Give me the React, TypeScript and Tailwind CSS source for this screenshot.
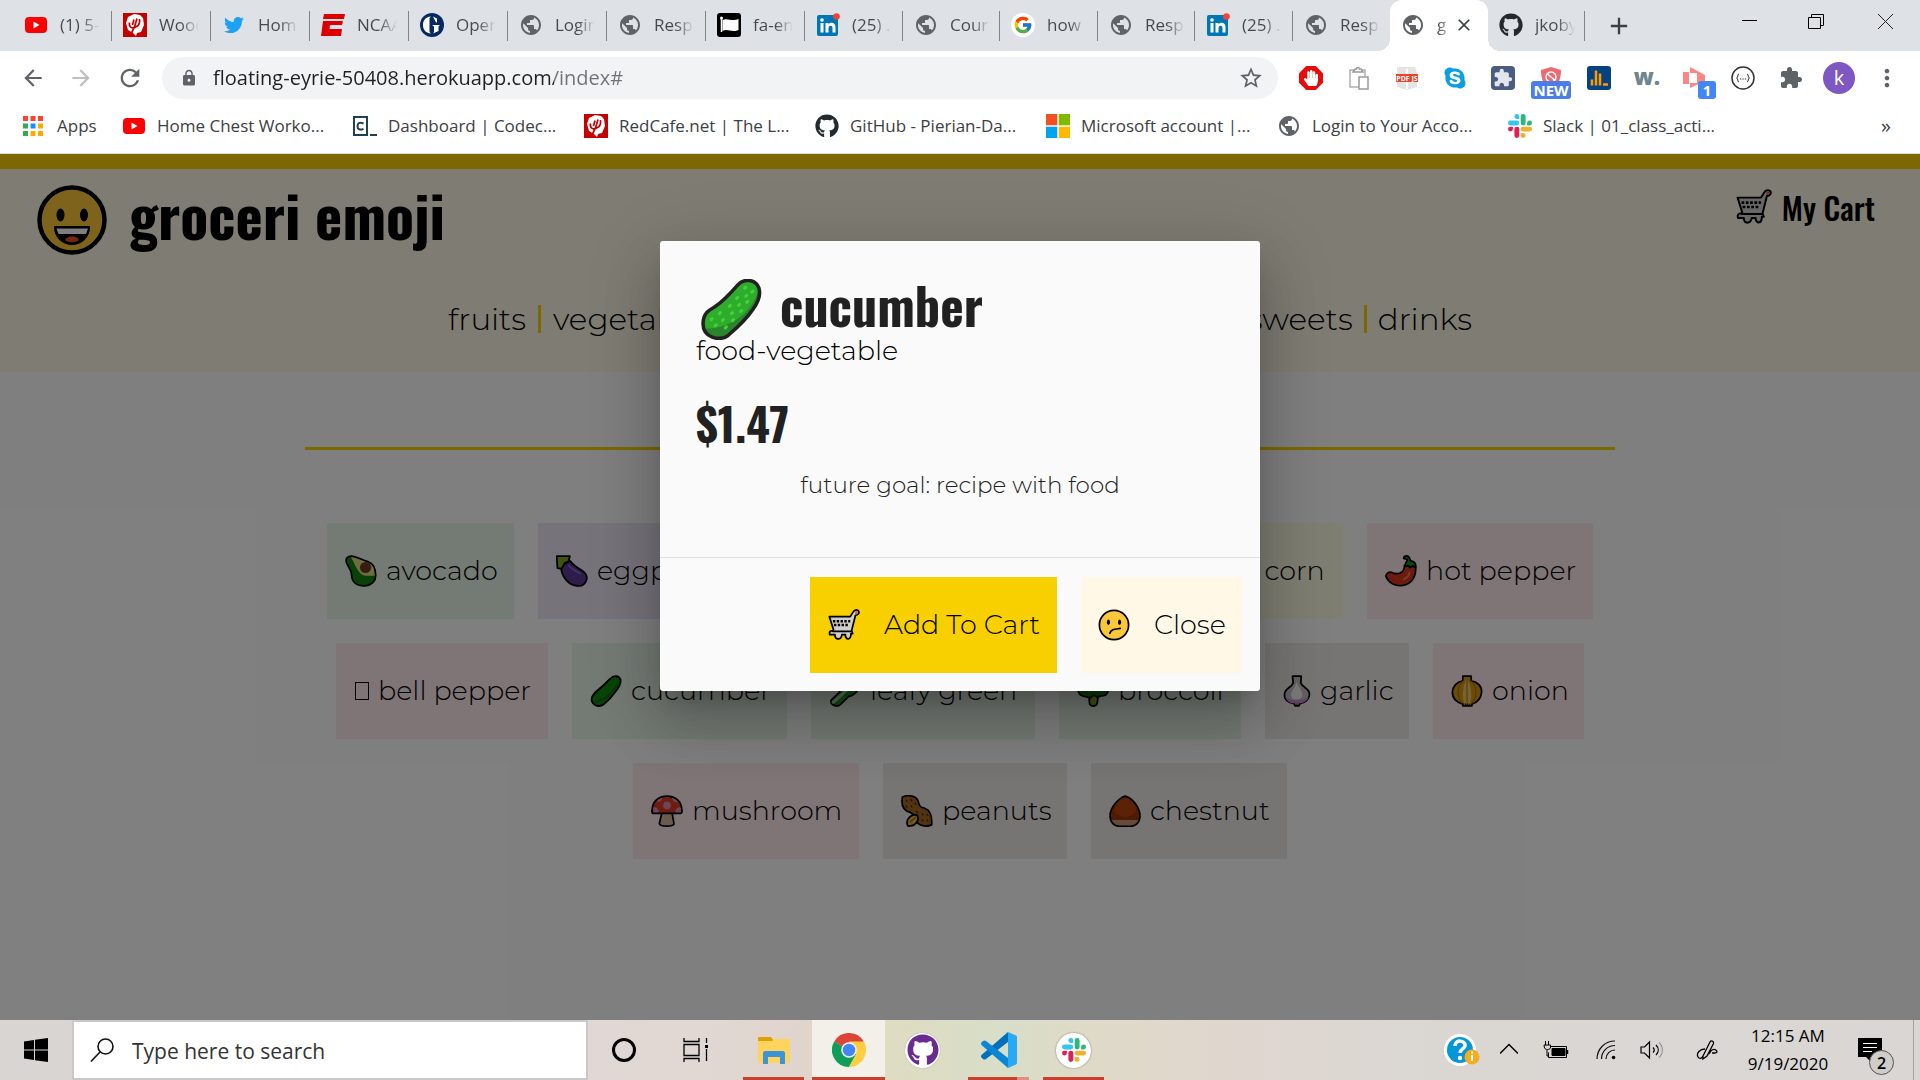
import React from "react";
import {
  MdPublic, MdArrowBack, MdArrowForward, MdRefresh, MdLock, MdStarBorder,
  MdExtension, MdMoreVert, MdClose, MdAdd,
} from "react-icons/md";
import { FaGithub, FaTwitter, FaSkype, FaHandPaper } from "react-icons/fa";
import { FcGoogle } from "react-icons/fc";

const UI = "font-['Open_Sans','Noto_Sans',sans-serif]";
const BODY = "font-['Montserrat','Inter','Lato',sans-serif] font-light";
const DISPLAY = "font-['Oswald','Liberation_Sans_Narrow','Roboto_Condensed','Liberation_Sans',sans-serif]";

type P = { className?: string };

/* ---------- brand icons ---------- */
const YouTube = ({ className = "size-6" }: P) => (
  <svg viewBox="0 0 24 24" className={className}>
    <rect x="1" y="4" width="22" height="16" rx="4" fill="#f00" />
    <path d="M9.5 8.5v7l6-3.5z" fill="#fff" />
  </svg>
);
const RedCafe = ({ className = "size-6" }: P) => (
  <svg viewBox="0 0 24 24" className={className}>
    <rect width="24" height="24" fill="#c40000" />
    <path d="M5 4l6-3 6 1 3 3 1 7-3 7-4 1-1 3-3-3-5-3-2-7z" fill="#fff" />
    <path d="M6.500 9.500c-1 5 3 6.500 6 4.500 3-1 4.500-4 4-8M11 6.500L9.500 12M14 5.500L11.500 14l-3.500 7" stroke="#c40000" strokeWidth="1.700" fill="none" />
  </svg>
);
const Espn = () => (
  <svg viewBox="0 0 24 24" className="size-6">
    <path d="M3 1h21l-1 5H2zM2 8h20l-1 4H9l-.5 4H21l-1 7H0z" fill="#d00" />
  </svg>
);
const OpenG = () => (
  <svg viewBox="0 0 24 24" className="size-6">
    <circle cx="12" cy="12" r="12" fill="#052962" />
    <path d="M11 3.500C5 4 3 8 3 12s2 8 8 8.500l-1.500-1.500V5zM13 3.500l4 2v4h-1zM12 12h8l-1.500 1.500V18L13 20.500l1-1.500v-5.500z" fill="#fff" />
  </svg>
);
const Globe = () => <MdPublic className="size-6 text-[#5f6368]" />;
const Flag = () => (
  <svg viewBox="0 0 24 24" className="size-6">
    <rect width="24" height="24" rx="3" fill="#000" />
    <path d="M4.500 5v14" stroke="#fff" strokeWidth="1.500" />
    <circle cx="4.500" cy="5" r="1.500" fill="#fff" />
    <path d="M5.500 7c5-2.500 9 2 16-1v11c-7 3-11-2-16 1z" fill="#fff" />
  </svg>
);
const LinkedIn = () => (
  <svg viewBox="0 0 24 24" className="size-6">
    <rect x="1" y="2" width="21" height="21" rx="2" fill="#0077b5" />
    <circle cx="6" cy="7" r="1.800" fill="#fff" />
    <path d="M4.500 10h3v9.500h-3zM9.500 10h3v1.400c1.500-2.500 7-2.300 7 2.600v5.500h-3V15c0-3-4-3-4 0v4.500h-3z" fill="#fff" />
    <circle cx="20.500" cy="3.500" r="3.300" fill="#f44336" />
  </svg>
);
const Google = () => (
  <span className="flex size-6 items-center justify-center rounded-full bg-white"><FcGoogle className="size-5" /></span>
);
const GitHub = () => <FaGithub className="size-6 text-[#24292e]" />;
const AppsGrid = () => (
  <svg viewBox="0 0 24 24" className="size-6">
    {["#ff4034", "#ff4034", "#ff4034", "#34a853", "#1a8cff", "#fbaa00", "#34a853", "#fbaa00", "#fbaa00"].map((c, i) => (
      <rect key={i} x={2 + (i % 3) * 7.500} y={2 + Math.floor(i / 3) * 7.500} width="5" height="5" fill={c} />
    ))}
  </svg>
);
const Codecademy = () => (
  <svg viewBox="0 0 24 24" className="size-6">
    <rect x="1" y="3" width="13" height="18" fill="#fff" stroke="#204056" strokeWidth="2" />
    <path d="M10.500 9.500c-4-2-6 0-6 2.700s2 4.500 6 2.600" fill="none" stroke="#204056" strokeWidth="2" />
    <path d="M17 21h7" stroke="#204056" strokeWidth="2" />
  </svg>
);
const Microsoft = () => (
  <svg viewBox="0 0 24 24" className="size-6">
    <path d="M0 0h11.300v11.300H0z" fill="#f25022" /><path d="M12.700 0H24v11.300H12.700z" fill="#7fba00" />
    <path d="M0 12.700h11.300V24H0z" fill="#00a4ef" /><path d="M12.700 12.700H24V24H12.700z" fill="#ffb900" />
  </svg>
);
const Slack = ({ className = "size-6" }: P) => (
  <svg viewBox="0 0 24 24" className={className}>
    <g fill="#36c5f0"><path d="M8.800 0a2.400 2.400 0 1 0 0 4.900h2.400V2.400A2.400 2.400 0 0 0 8.800 0z" /><rect y="6.500" width="11.200" height="4.900" rx="2.400" /></g>
    <g fill="#2eb67d"><path d="M24 8.900a2.400 2.400 0 1 0-4.900 0v2.500h2.500A2.400 2.400 0 0 0 24 8.900z" /><rect x="12.700" width="4.900" height="11.400" rx="2.400" /></g>
    <g fill="#ecb22e"><path d="M15.100 24a2.400 2.400 0 1 0 0-4.900h-2.400v2.500a2.400 2.400 0 0 0 2.400 2.400z" /><rect x="12.700" y="12.700" width="11.300" height="4.900" rx="2.400" /></g>
    <g fill="#e01e5a"><path d="M0 15.100a2.400 2.400 0 1 0 4.900 0v-2.400H2.400A2.400 2.400 0 0 0 0 15.100z" /><rect x="6.400" y="12.700" width="4.900" height="11.300" rx="2.400" /></g>
  </svg>
);

/* ---------- food and face emoji ---------- */
const line = { stroke: "#000", strokeWidth: 5, strokeLinejoin: "round" as const, strokeLinecap: "round" as const };

const Cart = ({ className = "size-8" }: P) => (
  <svg viewBox="0 0 92 92" className={className}>
    <path d="M4 22H64L72 9C75 2 85 1 88 6C91 13 86 17 79 18L68 62L71 71H66C66 90 50 90 50 74H40C38 90 20 90 20 74H5C3 66 6 62 14 62L16 60Z" fill="#d0cfce" {...line} />
    <path d="M78 7c5-3 9 0 8 4-2 4-5 4-8 3z" fill="#ea5a47" />
    <path d="M14 64H66" {...line} />
    <path d="M14 35H64M17 46H61" stroke="#000" strokeWidth="7" strokeDasharray="7 4" fill="none" />
  </svg>
);
const Confused = ({ className = "size-8" }: P) => (
  <svg viewBox="0 0 92 92" className={className}>
    <circle cx="46" cy="46" r="42" fill="#fcc739" {...line} />
    <ellipse cx="30" cy="38" rx="4.500" ry="8" /><ellipse cx="62" cy="38" rx="4.500" ry="8" />
    <path d="M34 70C38 57 50 58 64 56" fill="none" {...line} />
  </svg>
);
const Grin = ({ className = "" }: P) => (
  <svg viewBox="0 0 70 70" className={className}>
    <circle cx="35" cy="35" r="32.500" fill="#fcc739" stroke="#000" strokeWidth="4.500" />
    <ellipse cx="23.500" cy="30" rx="4" ry="6.500" /><ellipse cx="47" cy="30" rx="4" ry="6.500" />
    <path d="M18 42H52C52 52 44 59 35 59S18 52 18 42Z" fill="#000" stroke="#000" strokeWidth="2" />
    <path d="M19.500 43.500H51L49 49H21.500Z" fill="#fff" />
    <path d="M28 55c3-5 11-5 14 0-4 3-10 3-14 0z" fill="#ea4a27" />
  </svg>
);
const Cucumber = ({ className = "size-8" }: P) => (
  <svg viewBox="0 0 60 60" className={className}>
    <path d="M36 6C42-1 54 0 57 9C59 16 57 22 51 30C42 43 33 50 26 56C18 61 2 58 2 44C2 34 7 31 14 27C23 21 29 14 36 6Z" fill="#2fac2c" />
    <path d="M56 12C50 32 32 48 4 49C8 58 20 60 26 56C36 48 46 38 52 28C56 22 58 16 56 12Z" fill="#2a852c" />
    <path d="M43 9l1-1M44 17l1-1M50 13l1-1M35 19l1-1M37 26l1-1M45 23l1-1M28 27l1-1M30 34l1-1M39 32l1-1M18 34l1-1M21 41l1-1M31 41l1-1M10 40l1-1M14 46l1-1M24 48l1-1" stroke="#3ed43a" strokeWidth="3" strokeLinecap="round" />
    <path d="M36 6C42-1 54 0 57 9C59 16 57 22 51 30C42 43 33 50 26 56C18 61 2 58 2 44C2 34 7 31 14 27C23 21 29 14 36 6Z" fill="none" stroke="#212121" strokeWidth="3.500" />
  </svg>
);
const DarkCucumber = () => (
  <svg viewBox="0 0 60 60" className="size-8">
    <path d="M38 7C44 0 54 1 57 8C59 15 55 22 48 31C40 42 33 49 26 55C18 61 4 58 3 46C3 38 9 33 15 28C24 21 31 14 38 7Z" fill="#128a12" stroke="#000" strokeWidth="3.500" />
    <path d="M53 16C46 32 30 44 10 52" stroke="#0e700e" strokeWidth="5" fill="none" />
  </svg>
);
const Avocado = () => (
  <svg viewBox="0 0 92 92" className="size-8">
    <path d="M20 3C8 2 1 10 4 21C8 34 19 42 19 58C20 80 36 89 55 89C77 88 90 74 88 56C87 38 80 24 68 20C48 14 36 5 20 3Z" fill="#128312" />
    <path d="M17 4C28 26 38 56 58 60H88C87 38 80 24 68 20C48 14 36 5 17 4Z" fill="#d8dc82" />
    <circle cx="59" cy="36" r="16" fill="#6f3826" />
    <path d="M20 3C8 2 1 10 4 21C8 34 19 42 19 58C20 80 36 89 55 89C77 88 90 74 88 56C87 38 80 24 68 20C48 14 36 5 20 3Z" fill="none" {...line} />
  </svg>
);
const Eggplant = () => (
  <svg viewBox="0 0 92 92" className="size-8">
    <path d="M14 34C16 60 34 88 62 89C84 90 93 70 86 56C78 42 54 38 40 16Z" fill="#5c3a94" {...line} />
    <path d="M2 3H40L36 18L24 24L16 40L4 38Z" fill="#7ea616" {...line} />
    <path d="M36 30C46 42 58 46 70 54" stroke="#8a6ac4" strokeWidth="5" fill="none" strokeLinecap="round" />
  </svg>
);
const Potato = () => (
  <svg viewBox="0 0 92 92" className="size-8"><path d="M20 30C40 0 90 10 86 44C84 80 30 96 10 74C0 60 10 44 20 30Z" fill="#a57939" {...line} /></svg>
);
const Carrot = () => (
  <svg viewBox="0 0 92 92" className="size-8"><path d="M60 20L78 40L6 88Z" fill="#f1893b" {...line} /><path d="M66 28L70 4M68 30L90 20" {...line} stroke="#5c9e31" /></svg>
);
const Corn = () => (
  <svg viewBox="0 0 92 92" className="mr-1.5 size-8"><path d="M20 60C30 20 60 0 86 6C90 34 66 66 34 74Z" fill="#fcea2b" {...line} /><path d="M6 88L20 40C30 60 40 70 60 76Z" fill="#5c9e31" {...line} /></svg>
);
const HotPepper = () => (
  <svg viewBox="0 0 92 92" className="size-8">
    <path d="M56 30C56 52 38 56 24 52C12 46 2 52 3 62C10 80 30 90 48 88C78 86 90 60 88 34Z" fill="#d8361a" {...line} />
    <path d="M58 32C56 22 66 18 64 13L54 10C52 2 66 0 70 8C73 12 72 16 74 17C84 18 90 24 88 36L80 31L72 36L66 31Z" fill="#1c8a12" {...line} />
    <path d="M70 50C70 60 62 66 54 70" stroke="#f27a5a" strokeWidth="5" fill="none" strokeLinecap="round" />
  </svg>
);
const MissingGlyph = () => <span className="ml-px block h-[18px] w-[14px] border border-black" />;
const LeafyGreen = () => (
  <svg viewBox="0 0 92 92" className="size-8">
    <path d="M30 50C26 14 60-4 88 6C94 34 80 56 56 62L32 86C24 92 2 88 6 72Z" fill="#1f9a28" {...line} />
    <path d="M12 78C28 66 50 44 70 24" stroke="#b7d9b0" strokeWidth="9" fill="none" strokeLinecap="round" />
  </svg>
);
const Broccoli = () => (
  <svg viewBox="0 0 92 92" className="size-8">
    <path d="M34 50L36 82C40 92 54 92 58 82L62 50Z" fill="#8aa818" {...line} />
    <path d="M8 56C-4 40 8 24 22 22C30-2 64-2 70 22C88 24 96 42 84 56C76 62 66 58 60 64L48 58L38 66C28 60 16 64 8 56Z" fill="#0f7a16" {...line} />
  </svg>
);
const Garlic = () => (
  <svg viewBox="0 0 78 92" className="h-8 w-7">
    <path d="M26 3H51L50 22C54 36 76 38 75 56C74 70 62 80 48 82L44 89H34L30 82C14 80 2 70 3 56C3 38 24 36 28 22Z" fill="#c4c0c4" {...line} />
    <path d="M5 62C18 76 58 76 73 62C70 74 60 80 48 82H30C16 80 8 74 5 62Z" fill="#c98bd0" />
    <path d="M38 18C40 34 56 44 54 58C54 74 22 74 22 58C22 44 36 34 38 18Z" fill="#f6f4f6" />
    <path d="M32 82v6M39 82v7M46 82v6" stroke="#000" strokeWidth="3" />
  </svg>
);
const Onion = () => (
  <svg viewBox="0 0 92 92" className="size-8">
    <path d="M34 3H58V16C78 20 89 34 88 50C86 70 72 80 60 84V89H34V84C18 80 4 68 4 50C4 34 16 20 34 16Z" fill="#d6960c" {...line} />
    <path d="M46 10C58 30 62 60 54 82H38C30 60 34 30 46 10Z" fill="#eec66a" />
    <path d="M36 16C16 34 16 62 32 82M56 16C76 34 76 62 60 82M46 12V80" stroke="#a8700a" strokeWidth="3" fill="none" />
    <path d="M36 84v5M42 82v7M48 82v7M54 84v5" stroke="#000" strokeWidth="3" />
  </svg>
);
const Mushroom = () => (
  <svg viewBox="0 0 92 92" className="size-8">
    <path d="M32 48L24 82C24 92 68 92 66 82L60 48Z" fill="#d3b69f" {...line} />
    <path d="M3 46C3 18 22 3 46 3S89 18 89 46C90 52 86 53 82 53H10C4 53 2 52 3 46Z" fill="#dc3a1c" />
    <circle cx="46" cy="30" r="11" fill="#d88ab8" /><path d="M16 18C20 10 28 6 32 4C34 16 24 22 16 18ZM60 4C70 6 78 14 79 20C68 24 58 14 60 4ZM4 36C14 32 24 40 22 52H8ZM88 36C78 32 68 40 70 52H86Z" fill="#d88ab8" />
    <path d="M3 46C3 18 22 3 46 3S89 18 89 46C90 52 86 53 82 53H10C4 53 2 52 3 46Z" fill="none" {...line} />
  </svg>
);
const Peanuts = () => (
  <svg viewBox="0 0 92 92" className="size-8">
    <path d="M4 6C20-2 46 2 50 20C52 32 56 36 68 38C86 44 90 62 88 86C74 92 50 90 44 74C42 60 38 56 26 50C6 44 0 28 4 6Z" fill="#a5691c" {...line} />
    <path d="M14 14l4 6M28 12l4 6M40 22l3 6M14 30l4 6M28 30l4 6M60 52l4 6M74 54l4 6M60 70l4 6M74 70l4 6M44 46l4 6" stroke="#4a2a10" strokeWidth="4" />
    <path d="M18 84C14 68 30 54 46 58C54 70 44 88 26 89C20 90 18 88 18 84Z" fill="#e2ad42" {...line} />
    <path d="M26 78L42 64" stroke="#8a5a10" strokeWidth="3" />
  </svg>
);
const Chestnut = () => (
  <svg viewBox="0 0 92 92" className="size-8">
    <path d="M46 3C66 8 89 34 89 60C89 82 74 90 62 90H30C16 90 3 80 3 60C3 34 28 10 46 3Z" fill="#9c3608" />
    <path d="M46 3C66 10 76 26 78 42C72 70 20 70 16 42C18 24 32 8 46 3Z" fill="#b84510" />
    <path d="M4 72H88C86 84 76 90 62 90H30C16 90 6 84 4 72Z" fill="#cc9678" />
    <path d="M46 3C66 8 89 34 89 60C89 82 74 90 62 90H30C16 90 3 80 3 60C3 34 28 10 46 3Z" fill="none" {...line} />
  </svg>
);

/* ---------- browser chrome ---------- */
const tabs: { icon: React.ReactNode; title: string; w: string; active?: boolean }[] = [
  { icon: <YouTube />, title: "(1) 5-", w: "w-[99px]" },
  { icon: <RedCafe />, title: "Wood", w: "w-[99px]" },
  { icon: <FaTwitter className="size-5 text-[#1da1f2]" />, title: "Hom", w: "w-[99px]" },
  { icon: <Espn />, title: "NCAA", w: "w-[99px]" },
  { icon: <OpenG />, title: "Open", w: "w-[99px]" },
  { icon: <Globe />, title: "Login", w: "w-[99px]" },
  { icon: <Globe />, title: "Resp", w: "w-[99px]" },
  { icon: <Flag />, title: "fa-en", w: "w-[99px]" },
  { icon: <LinkedIn />, title: "(25) .", w: "w-[98px]" },
  { icon: <Globe />, title: "Cour", w: "w-[97px]" },
  { icon: <Google />, title: "how", w: "w-[98px]" },
  { icon: <Globe />, title: "Resp", w: "w-[97px]" },
  { icon: <LinkedIn />, title: "(25) .", w: "w-[98px]" },
  { icon: <Globe />, title: "Resp", w: "w-[97px]" },
  { icon: <Globe />, title: "g", w: "w-[98px]", active: true },
  { icon: <GitHub />, title: "jkoby", w: "w-[97px]" },
];

function TabStrip() {
  return (
    <div className="flex h-[51px] bg-[#dee1e6] pl-[13px]">
      {tabs.map((t, i) => (
        <div
          key={i}
          className={`relative flex h-full shrink-0 items-center pb-0.5 pl-[11px] ${t.w} ${t.active ? "rounded-t-xl bg-white" : ""}`}
        >
          <span className="flex size-6 shrink-0 items-center justify-center">{t.icon}</span>
          <span
            className={`ml-3 overflow-hidden whitespace-nowrap bg-clip-text text-[17px] text-transparent ${
              t.active ? "w-2.5 bg-linear-to-r from-[#3c4043] to-[#b0b3b6]" : "w-10 bg-[linear-gradient(to_right,#45494d_22px,transparent_40px)]"
            }`}
          >
            {t.title}
          </span>
          {t.active && (
            <>
              <button aria-label="Close tab" className="ml-[7px]"><MdClose className="size-5 text-[#3c4043]" /></button>
              <span className="absolute bottom-0 -left-3 size-3 bg-[radial-gradient(circle_at_0_0,transparent_12px,#fff_12px)]" />
              <span className="absolute -right-3 bottom-0 size-3 bg-[radial-gradient(circle_at_100%_0,transparent_12px,#fff_12px)]" />
            </>
          )}
          {!t.active && i !== 13 && <span className="absolute top-[11px] right-0 h-[30px] w-px bg-[#808387]" />}
        </div>
      ))}
      <button aria-label="New tab" className="ml-5"><MdAdd className="size-7 text-[#3c4043]" /></button>
      <div className="ml-auto flex gap-[44px] pt-[10px] pr-[23px]">
        <button aria-label="Minimize" className="size-6"><svg viewBox="0 0 24 24" className="size-6"><path d="M5 10.500h15" stroke="#000" strokeWidth="1" /></svg></button>
        <button aria-label="Restore" className="size-6">
          <svg viewBox="0 0 24 24" className="size-6" fill="none" stroke="#000"><path d="M3.500 7.500h12v11h-12zM6.500 7.500v-3h12v11h-3" /></svg>
        </button>
        <button aria-label="Close window" className="size-6"><svg viewBox="0 0 24 24" className="size-6"><path d="M5 4l15 15M20 4L5 19" stroke="#222" /></svg></button>
      </div>
    </div>
  );
}

const extensions: { name: string; icon: React.ReactNode }[] = [
  { name: "Ad blocker", icon: (
    <span className="flex size-6 items-center justify-center bg-[#e60c0c] [clip-path:polygon(30%_0,70%_0,100%_30%,100%_70%,70%_100%,30%_100%,0_70%,0_30%)]"><FaHandPaper className="size-4 text-white" /></span>) },
  { name: "Clipboard", icon: (
    <svg viewBox="0 0 24 24" className="size-6" fill="none" stroke="#b0b0b0" strokeWidth="1.500"><path d="M12 21H3V4h15v6" /><path d="M6 6l2-3h1.500a1.500 1.500 0 0 1 3 0H14l2 3z" fill="#fff" stroke="#999" /><rect x="12" y="11" width="9" height="12" fill="#fff" stroke="#999" /></svg>) },
  { name: "PDF JS", icon: (
    <svg viewBox="0 0 24 24" className="size-6"><path d="M2 1h18l2 6v14l-10 3-10-3z" fill="#e4e4e4" /><path d="M12 3v20" stroke="#fff" strokeWidth="2" /><rect x="1" y="8" width="22" height="8" fill="#e8432d" /><text x="12" y="14.500" fontSize="7" fontWeight="700" fill="#fff" textAnchor="middle" fontFamily="Open Sans">PDF JS</text></svg>) },
  { name: "Skype", icon: <FaSkype className="size-6 text-[#0a9fe0]" /> },
  { name: "Puzzle", icon: <span className="flex size-6 items-center justify-center rounded bg-[#4a5c80]"><MdExtension className="size-5 text-[#e2e6ee]" /></span> },
  { name: "Shield", icon: (
    <span className="relative block size-6">
      <svg viewBox="0 0 24 24" className="size-6"><path d="M2 4l10-3 10 3c0 10-3 16-10 19C5 20 2 14 2 4z" fill="#ef6a6e" /><circle cx="12" cy="11" r="5" fill="none" stroke="#fff" strokeWidth="1.500" /><path d="M8.500 8l7 6" stroke="#fff" strokeWidth="1.500" /></svg>
      <span className="absolute top-[15px] -left-2 w-10 rounded-[3px] bg-[#4b7de8] text-center text-[15px] leading-[18px] font-bold text-white">NEW</span>
    </span>) },
  { name: "Analytics", icon: (
    <svg viewBox="0 0 24 24" className="size-6"><rect width="24" height="24" rx="3" fill="#05427f" /><path d="M5 19.500v-6M9 19.500V4.500M13 19.500v-12M16 18.500h5" stroke="#ff9d00" strokeWidth="2.500" /></svg>) },
  { name: "W", icon: <span className="block h-8 text-[22px] leading-7 font-extrabold text-[#71848e]">w.</span> },
  { name: "Recorder", icon: (
    <span className="relative block size-6">
      <svg viewBox="0 0 24 24" className="size-6" fill="#fd8583"><path d="M0 6h6v12H0zM7 1l15 8v6L7 22v-5h7V7H7z" /></svg>
      <span className="absolute top-[15px] left-[15px] w-[18px] rounded-[3px] bg-[#4285f4] text-center text-[15px] leading-[18px] font-bold text-white">1</span>
    </span>) },
  { name: "JSON", icon: (
    <svg viewBox="0 0 24 24" className="size-6" fill="none" stroke="#333"><circle cx="12" cy="12" r="11" strokeWidth="1.500" /><path d="M8 8c-2 0-.5 4-2.500 4C7.500 12 6 16 8 16M16 8c2 0 .5 4 2.500 4-2 0-.5 4-2.500 4M9 13h1.300M11.400 13h1.300M13.800 13h1.300" /></svg>) },
  { name: "Extensions", icon: <MdExtension className="size-6 text-[#5f6368]" /> },
  { name: "Profile", icon: <span className="-mx-1 flex size-8 shrink-0 items-center justify-center rounded-full bg-[#7e57c2] text-xl text-white">k</span> },
  { name: "Menu", icon: <MdMoreVert className="size-7 -mx-0.5 text-[#5f6368]" /> },
];

function Toolbar() {
  return (
    <div className="flex h-[54px] items-center bg-white pl-5">
      <button aria-label="Back"><MdArrowBack className="size-[26px] text-[#5f6368]" /></button>
      <button aria-label="Forward" className="ml-[22px]"><MdArrowForward className="size-[26px] text-[#bdbfc1]" /></button>
      <button aria-label="Reload" className="ml-[22px]"><MdRefresh className="size-7 text-[#5f6368]" /></button>
      <div className="ml-[18px] flex h-[42px] flex-1 items-center rounded-full bg-[#f1f3f4] pr-[14px] pl-[18px]">
        <MdLock className="size-[18px] text-[#5f6368]" />
        <input
          aria-label="Address"
          defaultValue="floating-eyrie-50408.herokuapp.com/index#"
          className="ml-[15px] min-w-0 flex-1 bg-[linear-gradient(to_right,#202124_341px,#6f7378_341px)] bg-clip-text text-xl text-transparent outline-none"
        />
        <button aria-label="Bookmark this page"><MdStarBorder className="size-[26px] text-[#5f6368]" /></button>
      </div>
      <div className="ml-[21px] flex items-center gap-6 pr-[21px]">
        {extensions.map((e) => (
          <button key={e.name} aria-label={e.name} className="flex h-8 w-6 items-center justify-center">{e.icon}</button>
        ))}
      </div>
    </div>
  );
}

const bookmarks = [
  { icon: <YouTube />, title: "Home Chest Worko..." },
  { icon: <Codecademy />, title: "Dashboard | Codec..." },
  { icon: <RedCafe />, title: "RedCafe.net | The L..." },
  { icon: <GitHub />, title: "GitHub - Pierian-Da..." },
  { icon: <Microsoft />, title: "Microsoft account |..." },
  { icon: <Globe />, title: "Login to Your Acco..." },
  { icon: <Slack />, title: "Slack | 01_class_acti..." },
];

function Bookmarks() {
  return (
    <nav className="flex h-[49px] items-center border-b border-[#dadce0] bg-white pb-1.5 pl-[21px] text-[17px] text-[#3c4043]">
      <a href="#apps" className="flex w-[101px] items-center gap-3"><AppsGrid />Apps</a>
      {bookmarks.map((b) => (
        <a key={b.title} href="#bookmark" className="flex w-[231px] items-center gap-[11px] whitespace-nowrap">{b.icon}{b.title}</a>
      ))}
      <button aria-label="More bookmarks" className="mr-[29px] ml-auto text-xl">»</button>
    </nav>
  );
}

/* ---------- web page ---------- */
const GREEN = "bg-[#e8f5e9]", PINK = "bg-[#ffebee]", GREY = "bg-[#efebe9]";
const foods = [
  { icon: <Avocado />, name: "avocado", cls: `${GREEN} w-[187px]` },
  { icon: <Eggplant />, name: "eggplant", cls: "bg-[#ede7f6] w-[195px]" },
  { icon: <Potato />, name: "potato", cls: `${GREY} w-[157px]` },
  { icon: <Carrot />, name: "carrot", cls: "bg-[#fff3e0] w-[156px]" },
  { icon: <Corn />, name: "ear of corn", cls: "bg-[#fffde7] w-[225px]" },
  { icon: <HotPepper />, name: "hot pepper", cls: `${PINK} w-[226px]` },
  { icon: <MissingGlyph />, name: "bell pepper", cls: `${PINK} w-[212px]` },
  { icon: <DarkCucumber />, name: "cucumber", cls: `${GREEN} w-[215px]` },
  { icon: <LeafyGreen />, name: "leafy green", cls: `${GREEN} w-[224px]` },
  { icon: <Broccoli />, name: "broccoli", cls: `${GREEN} w-[182px]` },
  { icon: <Garlic />, name: "garlic", cls: `${GREY} w-[144px]` },
  { icon: <Onion />, name: "onion", cls: `${PINK} w-[151px]` },
  { icon: <Mushroom />, name: "mushroom", cls: `${PINK} w-[226px]` },
  { icon: <Peanuts />, name: "peanuts", cls: `${GREY} w-[184px]` },
  { icon: <Chestnut />, name: "chestnut", cls: `${GREY} w-[196px]` },
];

const Bar = () => <span className="h-7 w-[3px] bg-[#f8d000]" />;

function Shop() {
  return (
    <div className={`h-full bg-white text-black ${BODY}`}>
      <header className="border-t-[15px] border-[#f8d000] bg-[#fff9e7]">
        <div className="flex items-start justify-between pt-4 pr-[45px] pl-[37px]">
          <a href="#home" className={`flex items-center gap-[22px] text-[58px] leading-[58px] font-bold ${DISPLAY}`}>
            <Grin className="size-[70px]" /><span className="pb-3">groceri emoji</span>
          </a>
          <a href="#cart" className={`flex items-center gap-[10px] pt-1 text-[31px] leading-9 font-medium ${DISPLAY}`}>
            <Cart className="size-[36px]" />My Cart
          </a>
        </div>
        <nav className="mx-auto flex max-w-[1024px] items-center justify-between pt-10 pb-[29px] text-[31px] leading-[48px]">
          <div className="flex items-center gap-3"><a href="#fruits">fruits</a><Bar /><a href="#vegetables">vegetables</a></div>
          <div className="flex items-center gap-3"><Bar /><a href="#prepared">prepared</a><Bar /></div>
          <div className="flex items-center gap-[11px]"><a href="#sweets">sweets</a><Bar /><a href="#drinks">drinks</a></div>
        </nav>
      </header>
      <main className="mx-auto w-[70%] px-[17px] pt-[75px]">
        <hr className="h-[3px] border-0 bg-[#f8d000]" />
        <div className="mt-[73px] flex flex-wrap justify-center gap-6">
          {foods.map((f) => (
            <button key={f.name} className={`flex h-24 items-center gap-[9px] pl-[18px] text-[27px] whitespace-nowrap ${f.cls}`}>
              <span className="shrink-0">{f.icon}</span>{f.name}
            </button>
          ))}
        </div>
      </main>
    </div>
  );
}

function FoodDialog() {
  return (
    <div className={`absolute inset-0 flex items-start justify-center bg-black/50 pt-[87px] ${BODY}`}>
      <div
        role="dialog"
        aria-labelledby="food-name"
        className="w-[600px] rounded-[3px] bg-[#fafafa] shadow-[0_36px_57px_4px_rgba(0,0,0,0.14),0_14px_69px_12px_rgba(0,0,0,0.12),0_16px_22px_-10px_rgba(0,0,0,0.2)]"
      >
        <div className="h-[316px] px-9 pt-[38px]">
          <h1 id="food-name" className={`flex h-[61px] items-center gap-[18px] pl-[5px] text-[50px] leading-[50px] font-bold text-[#212121] ${DISPLAY}`}>
            <Cucumber className="size-[61px]" /><span className="pb-3">cucumber</span>
          </h1>
          <p className="-mt-[7px] text-[27px] leading-9 text-black">food-vegetable</p>
          <p className={`mt-[26px] text-[45px] leading-[56px] font-bold text-[#212121] ${DISPLAY}`}>$1.47</p>
          <p className="mt-4 text-center text-[23px] leading-9 text-[#212121]">future goal: recipe with food</p>
        </div>
        <div className="flex justify-end gap-6 border-t border-[#e0e0e0] pt-[19px] pr-[18px] pb-[18px] text-[27px]">
          <button className="flex h-24 w-[247px] items-center gap-6 bg-[#f8d000] pl-[18px] whitespace-nowrap"><Cart className="size-8 shrink-0" />Add To Cart</button>
          <button className="flex h-24 w-[161px] items-center gap-6 bg-[#fff8e7] pl-[17px]"><Confused className="size-8 shrink-0" />Close</button>
        </div>
      </div>
    </div>
  );
}

/* ---------- taskbar ---------- */
const Explorer = () => (
  <svg viewBox="0 0 34 34" className="size-[34px]">
    <path d="M1 5c0-1 1-1 2-1h11l3 4H1z" fill="#e0a000" />
    <path d="M1 8h14l3-2h14c1 0 1 1 1 2v20c0 1-1 2-2 2H3c-1 0-2-1-2-2z" fill="#ffd35c" />
    <path d="M6 31V20c0-1 1-2 2-2h18c1 0 2 1 2 2v11h-5v-7H11v7z" fill="#3a94dc" />
  </svg>
);
const Chrome = () => (
  <svg viewBox="0 0 48 48" className="size-[34px]">
    <path d="M24 24L3.200 12A24 24 0 0 1 44.800 12z" fill="#db4437" />
    <path d="M24 24L3.200 12A24 24 0 0 0 24 48L34 30z" fill="#0f9d58" />
    <path d="M24 12H44.800A24 24 0 0 1 24 48L34.400 30z" fill="#ffcd40" />
    <circle cx="24" cy="24" r="11" fill="#f1f1f1" /><circle cx="24" cy="24" r="8.800" fill="#4285f4" />
  </svg>
);
const GitHubDesktop = () => (
  <span className="flex size-[35px] items-center justify-center rounded-full bg-white shadow-[0_0_1px_#888]"><FaGithub className="size-8 text-[#6b2a8f]" /></span>
);
const VsCode = () => (
  <svg viewBox="0 0 36 36" className="size-9">
    <path d="M27 0v10L5 27c-1 .7-2 .7-3 0l-1.500-1.500c-.7-.8-.7-1.800 0-2.500z" fill="#0070b8" />
    <path d="M27 36V26L5 9c-1-.7-2-.7-3 0L.5 10.500c-.7.800-.7 1.800 0 2.500z" fill="#0a86d4" />
    <path d="M25 0l2-0 8 3.500c.7.400 1 1 1 1.500v26c0 .6-.3 1.200-1 1.500L27 36l-2-.5c1 .5 2-.5 2-1.500V2c0-1-1-2-2-2z" fill="#29a9f2" />
  </svg>
);

const apps = [
  { name: "File Explorer", icon: <Explorer />, cls: "w-[61px]", bar: "w-[61px]" },
  { name: "Google Chrome", icon: <Chrome />, cls: "w-[73px] ml-2 bg-[#f3f0ea]", bar: "w-[73px]" },
  { name: "GitHub Desktop", icon: <GitHubDesktop />, cls: "w-[75px]", bar: "w-0" },
  { name: "Visual Studio Code", icon: <VsCode />, cls: "ml-2 w-[61px]", bar: "w-[61px] bg-[linear-gradient(to_right,#c8402a_49px,#df8e80_49px)]" },
  { name: "Slack", icon: <span className="flex size-[35px] items-center justify-center rounded-full bg-white shadow-[0_0_2px_#777]"><Slack /></span>, cls: "ml-[14px] w-[61px]", bar: "w-[61px]" },
];

function Taskbar() {
  return (
    <footer className="flex h-[60px] shrink-0 bg-[linear-gradient(to_right,#d9d5d2_0,#e1d8d4_36%,#e0d5cc_42%,#dfdcc2_46%,#d8dec8_52%,#dfdac8_57%,#dfd6cf_65%,#dad7d3_75%,#d9d6d4_100%)] text-black">
      <button aria-label="Start" className="w-[72px] pl-6">
        <svg viewBox="0 0 24 24" className="size-6"><path d="M0 3.400L10 2v9.500H0zM11 1.800L24 0v11.500H11zM0 12.500h10V22L0 20.600zM11 12.500h13V24l-13-1.800z" /></svg>
      </button>
      <label className="flex w-[516px] items-center border-2 border-[#c9c9c9] bg-white pl-4">
        <svg viewBox="0 0 24 24" className="size-6" fill="none" stroke="#111" strokeWidth="1.600"><circle cx="15.500" cy="8.500" r="7.500" /><path d="M10 14L1 23.500" /></svg>
        <input aria-label="Search" placeholder="Type here to search" className="ml-[18px] min-w-0 flex-1 pt-1 text-[21px] outline-none placeholder:text-[#333]" />
      </label>
      <button aria-label="Cortana" className="flex w-[72px] items-center justify-center"><span className="size-6 rounded-full border-[3px] border-black" /></button>
      <button aria-label="Task view" className="flex w-[72px] items-center justify-center">
        <svg viewBox="0 0 26 24" className="h-6 w-[26px]" fill="none" stroke="#000" strokeWidth="1.300"><path d="M1 0v3.500h15V0M1 24v-3.500h15V24M1 6.500h15v11H1zM23.500 0v5M23.500 11v12" /><path d="M22 7h3v3h-3z" fill="#000" stroke="none" /></svg>
      </button>
      <div className="ml-[11px] flex">
        {apps.map((a) => (
          <button key={a.name} aria-label={a.name} className={`relative flex items-center justify-center ${a.cls}`}>
            {a.icon}<span className={`absolute bottom-0 left-0 h-[3px] bg-[#c8402a] ${a.bar}`} />
          </button>
        ))}
      </div>
      <div className="ml-auto flex items-center">
        <svg viewBox="0 0 36 34" className="mr-5 size-9"><circle cx="16" cy="17" r="16" fill="#fff" /><circle cx="16" cy="17" r="13" fill="#0596d8" /><path d="M11 13c0-7 11-6 10 0-.5 3-5 3-5 7" fill="none" stroke="#fff" strokeWidth="3.500" /><circle cx="16" cy="25" r="2.200" fill="#fff" /><circle cx="28" cy="24" r="7.500" fill="#f5ad1e" /><path d="M28 22v6M28 18.500v2" stroke="#fff" strokeWidth="2" /></svg>
        <svg viewBox="0 0 18 18" className="mr-[25px] size-[18px]"><path d="M0 12.500l9-9 9 9" fill="none" stroke="#000" strokeWidth="1.500" /></svg>
        <svg viewBox="0 0 26 20" className="mr-[27px] h-5 w-[26px]" fill="none" stroke="#000"><path d="M8 6.500h15.500v11H5.500v-5" /><path d="M9 8.500h13v7H9z" fill="#000" /><path d="M24.500 10v4" strokeWidth="1.500" /><path d="M2.500 1v4M5.500 1v4M1 5h6.500v3c-1 2-5 2-6 0zM4 10v6h2" /></svg>
        <svg viewBox="0 0 20 20" className="mr-6 size-5" fill="none" stroke="#111" strokeWidth="1.200"><path d="M1 19C1 9 9 1 19 1M5.500 19C5.500 11.500 11.500 5.500 19 5.500M10 19c0-5 4-9 9-9" /><circle cx="17.500" cy="17.500" r="1.800" fill="#000" stroke="none" /></svg>
        <svg viewBox="0 0 24 20" className="mr-8 h-5 w-6" fill="none" stroke="#000" strokeWidth="1.200"><path d="M1 7h3.500l5-5v16l-5-5H1z" /><path d="M13 7.500c1.500 1.500 1.500 3.500 0 5M16 5c3 3 3 7 0 10" /><path d="M19 2.500c4.500 4 4.500 11 0 15" stroke="#999" /></svg>
        <svg viewBox="0 0 22 22" className="mr-[26px] size-[22px]" fill="none" stroke="#000" strokeWidth="1.300"><path d="M7 17L14 3c1-2 4-1 3.500 1.500L11 17l-4 3zM9 10C4 10 0 14 2 18c1 2 4 2 5-1M12 15c2 0 2-3 4-4 4-2 7 3 3 3h-3" /></svg>
        <time className="w-[88px] text-center text-[17px] leading-7">12:15 AM<br />9/19/2020</time>
        <button aria-label="2 notifications" className="relative ml-[26px] size-6">
          <svg viewBox="0 0 24 24" className="size-6"><path d="M0 0h24v19H14v6l-6-6H0z" /><path d="M5 5.500h14M5 9.500h14M5 13.500h9" stroke="#fff" /></svg>
          <span className="absolute top-3 left-[11px] flex size-[25px] items-center justify-center rounded-full border border-[#555] bg-[#cfccca] text-base font-semibold">2</span>
        </button>
        <span className="ml-[31px] h-full w-px bg-[#a5a3a1]" />
        <span className="w-1.5" />
      </div>
    </footer>
  );
}

export default function App() {
  return (
    <div className={`flex h-screen flex-col overflow-hidden ${UI}`}>
      <TabStrip />
      <Toolbar />
      <Bookmarks />
      <div className="relative min-h-0 flex-1 overflow-hidden">
        <Shop />
        <FoodDialog />
      </div>
      <Taskbar />
    </div>
  );
}
